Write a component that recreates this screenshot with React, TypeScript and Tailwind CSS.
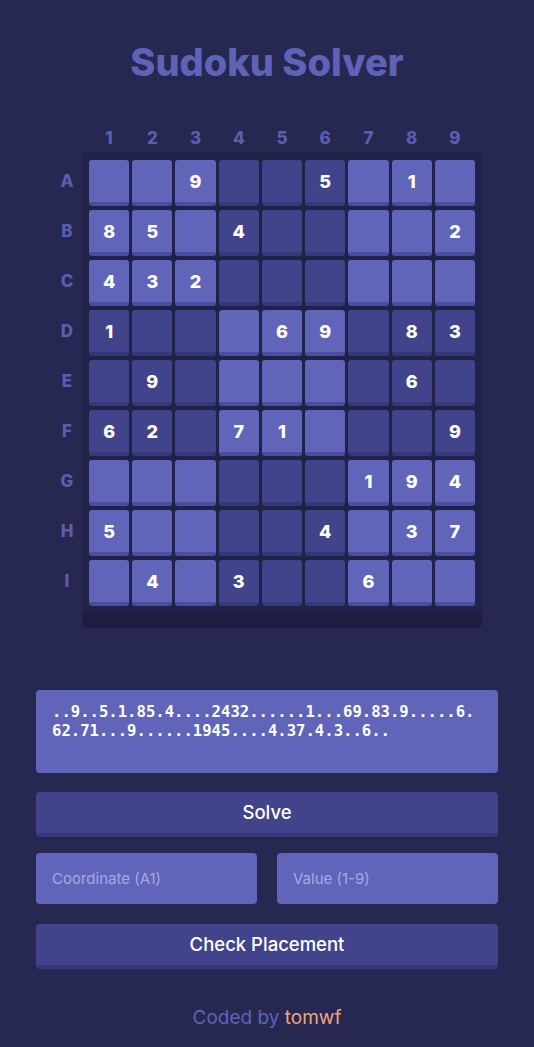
import React from 'react';

const puzzle = '..9..5.1.85.4....2432......1...69.83.9.....6.62.71...9......1945....4.37.4.3..6..';
const rows = ['A', 'B', 'C', 'D', 'E', 'F', 'G', 'H', 'I'];
const cols = ['1', '2', '3', '4', '5', '6', '7', '8', '9'];

const Cell = ({ value, light }: { value: string; light: boolean }) => (
  <div
    className={
      light
        ? 'h-[46px] rounded-[3px] border-b-4 border-[#4b4e9e] bg-[#6165b9] flex items-center justify-center text-white text-[18px] font-extrabold'
        : 'h-[46px] rounded-[3px] border-b-4 border-[#36387a] bg-[#42448b] flex items-center justify-center text-white text-[18px] font-extrabold'
    }
  >
    {value === '.' ? '' : value}
  </div>
);

const App = () => {
  return (
    <div
      className="min-h-screen w-full bg-[#262852] pt-[40px] pb-[20px] px-[36px]"
      style={{ fontFamily: 'Inter, "Noto Sans", sans-serif' }}
    >
      {/* Title */}
      <h1 className="text-center text-[38px] leading-[44px] font-extrabold text-[#5e63b8]">
        Sudoku Solver
      </h1>

      {/* Board */}
      <div className="mt-[42px] px-4">
        <div className="ml-[30px] grid grid-cols-9 gap-x-[3px] px-[7px] h-[22px] mb-[4px]">
          {cols.map((c) => (
            <div key={c} className="flex items-center justify-center text-[17px] font-extrabold text-[#5a5eb0]">
              {c}
            </div>
          ))}
        </div>
        <div className="flex">
          <div className="w-[30px] pt-[8px] flex flex-col gap-y-[4px]">
            {rows.map((r) => (
              <div key={r} className="h-[46px] pt-[1px] pb-[3px] flex items-center justify-center text-[17px] font-extrabold text-[#5a5eb0]">
                {r}
              </div>
            ))}
          </div>
          <div className="w-[400px] rounded-[5px] bg-[#21224a] border-b-[15px] border-[#1c1d40] px-[7px] pt-[8px] pb-[7px]">
            <div className="grid grid-cols-9 gap-x-[3px] gap-y-[4px]">
              {rows.map((r, ri) =>
                cols.map((c, ci) => (
                  <Cell
                    key={r + c}
                    value={puzzle[ri * 9 + ci]}
                    light={(Math.floor(ri / 3) + Math.floor(ci / 3)) % 2 === 0}
                  />
                ))
              )}
            </div>
          </div>
        </div>
      </div>

      {/* Puzzle string */}
      <textarea
        readOnly
        value={puzzle}
        className="mt-[62px] block w-full h-[83px] resize-none rounded-[4px] bg-[#6165b9] px-4 pt-[13px] text-white text-[15.6px] leading-[19px] font-bold outline-none"
        style={{ fontFamily: '"DejaVu Sans Mono", "Liberation Mono", monospace', wordBreak: 'break-all' }}
      />

      <button className="mt-[19px] block w-full h-[45px] rounded-[4px] bg-[#42448b] border-b-4 border-[#36387a] text-white text-[18.5px] font-medium">
        Solve
      </button>

      {/* Check placement */}
      <div className="mt-[16px] flex gap-[20px]">
        <input
          placeholder="Coordinate (A1)"
          className="w-0 flex-1 h-[51px] rounded-[4px] bg-[#6165b9] px-4 text-[15px] text-white placeholder:text-[#a6a9e0] outline-none"
        />
        <input
          placeholder="Value (1-9)"
          className="w-0 flex-1 h-[51px] rounded-[4px] bg-[#6165b9] px-4 text-[15px] text-white placeholder:text-[#a6a9e0] outline-none"
        />
      </div>

      <button className="mt-[20px] block w-full h-[45px] rounded-[4px] bg-[#42448b] border-b-4 border-[#36387a] text-white text-[18.5px] font-medium">
        Check Placement
      </button>

      {/* Footer */}
      <p className="mt-[35px] text-center text-[19px] text-[#5e63b8]">
        Coded by <span className="text-[#f4a37b]">tomwf</span>
      </p>
    </div>
  );
};

export default App;
